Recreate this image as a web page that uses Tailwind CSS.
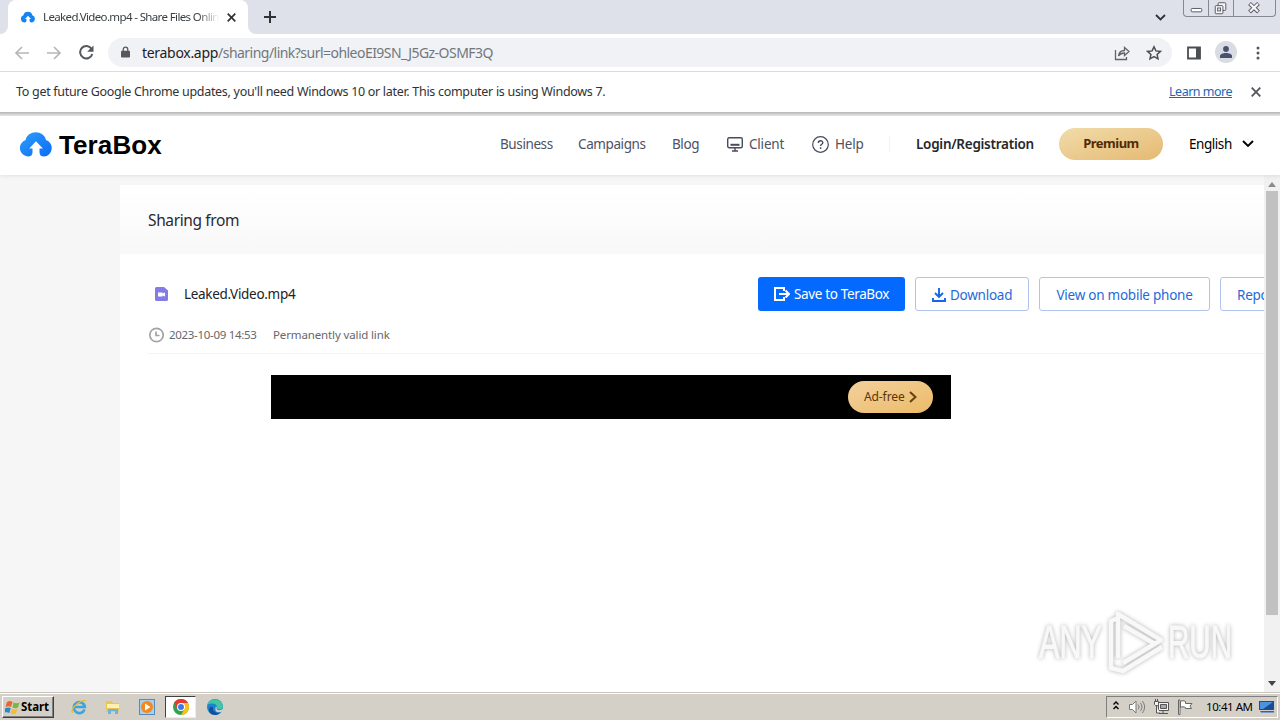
<!DOCTYPE html>
<html lang="en">
<head>
    <meta charset="UTF-8">
    <meta name="viewport" content="width=device-width, initial-scale=1.0">
    <title>Leaked.Video.mp4 - Share Files Online</title>
    <script src="https://cdn.jsdelivr.net/npm/@tailwindcss/browser@4"></script>
</head>
<body class="w-[1280px] h-[720px] overflow-hidden flex flex-col bg-white font-['Noto_Sans',sans-serif] whitespace-nowrap">
    <!-- Tab strip -->
    <div class="h-[34px] shrink-0 bg-[#dee1e9] flex">
        <div class="w-2 flex items-end"><div class="w-2 h-2 bg-white"><div class="w-2 h-2 bg-[#dee1e9] rounded-br-lg"></div></div></div>
        <div class="w-[240px] bg-white rounded-t-lg flex items-center pl-[13px]">
            <svg class="w-[14px] h-3 shrink-0" viewBox="0 0 32 26" fill="#1683f7"><path d="M8 25.500A8.500 8.500 0 0 1 5.500 9 10.500 10 0 0 1 26 9a8.500 8.500 0 0 1-2 16.500c-3 0-4.500-1.500-4.500-4.500v-3.500h3.300L16 10.300 9.200 17.500h3.300V21c0 3-1.500 4.500-4.500 4.500z"/></svg>
            <div class="ml-2 w-[176px] text-[11.5px] tracking-[-0.63px] text-[#3c4043] [mask-image:linear-gradient(to_right,#000_88%,transparent)]">Leaked.Video.mp4 - Share Files Onlin</div>
            <svg class="w-[9px] h-[9px] ml-2 shrink-0" viewBox="0 0 9 9" stroke="#303236" stroke-width="1.700"><path d="M.7.7l7.600 7.600M8.300.7L.7 8.300"/></svg>
        </div>
        <div class="w-2 flex items-end"><div class="w-2 h-2 bg-white"><div class="w-2 h-2 bg-[#dee1e9] rounded-bl-lg"></div></div></div>
        <svg class="w-3 h-3 ml-2 mt-[11px]" viewBox="0 0 12 12" stroke="#303236" stroke-width="2"><path d="M6 0v12M0 6h12"/></svg>
        <svg class="w-[11px] h-[7px] ml-auto mt-[14px] mr-[17px]" viewBox="0 0 11 7" fill="none" stroke="#303236" stroke-width="1.800"><path d="M1 1l4.500 4.500L10 1"/></svg>
        <div class="w-[93px] h-[17px] mr-1 border border-t-0 border-[#85888f] rounded-b-[4px] flex">
            <svg class="w-[25px] h-4 border-r border-[#85888f]" viewBox="0 0 25 16"><rect x="7.500" y="8.500" width="11" height="3.500" rx="1" fill="#fff" stroke="#55585e"/></svg>
            <svg class="w-[25px] h-4 border-r border-[#85888f]" viewBox="0 0 25 16" fill="#f4f5f8" stroke="#55585e"><rect x="9.500" y="2.500" width="8" height="8" rx="1"/><rect x="6.500" y="5.500" width="8" height="8.500" rx="1"/><rect x="9" y="8" width="3" height="3"/></svg>
            <svg class="w-[41px] h-4" viewBox="0 0 41 16"><path d="M15.500 3.500l9 8.500M24.500 3.500l-9 8.500" stroke="#55585e" stroke-width="4"/><path d="M16 3.900l8 7.600M24 3.900l-8 7.600" stroke="#f4f5f8" stroke-width="2.200"/></svg>
        </div>
    </div>

    <!-- Toolbar -->
    <div class="h-[38px] shrink-0 border-b border-[#d9dbdf] flex items-center">
        <svg class="w-4 h-[14px] ml-[14px]" viewBox="0 0 16 14" fill="none" stroke="#b5b7ba" stroke-width="1.700"><path d="M15 7H2M8 1L2 7l6 6"/></svg>
        <svg class="w-4 h-[14px] ml-4" viewBox="0 0 16 14" fill="none" stroke="#b5b7ba" stroke-width="1.700"><path d="M1 7h13M8 1l6 6-6 6"/></svg>
        <svg class="w-[15px] h-[15px] ml-[17px]" viewBox="0 0 15 15"><path d="M12.500 3.800A6.200 6.200 0 1 0 13.300 9" fill="none" stroke="#55585c" stroke-width="2"/><path d="M14.500.5v6.300H8.200z" fill="#55585c"/></svg>
        <div class="ml-[14px] w-[1064px] h-[29px] rounded-full bg-[#f0f2f5] flex items-center">
            <svg class="w-[9px] h-3 ml-[13px] mb-[2px]" viewBox="0 0 10 12"><rect y="4.500" width="10" height="7.500" rx="1" fill="#55585c"/><path d="M2.500 5V3a2.500 2.500 0 0 1 5 0v2" fill="none" stroke="#55585c" stroke-width="1.400"/></svg>
            <div class="ml-[12px] text-[14px] tracking-[-0.53px] text-[#73777c]"><span class="text-[#202124] tracking-[-0.3px]">terabox.app</span>/sharing/link?surl=ohleoEI9SN_J5Gz-OSMF3Q</div>
            <svg class="w-4 h-4 ml-auto mr-4" viewBox="0 0 16 16" fill="none" stroke="#5f6368" stroke-width="1.300"><path d="M1.500 5v9.500h11V12M4.500 11c.5-4 3-5.500 6-5.500V2.500l4.500 4-4.500 4V8c-3 0-4.500.8-6 3z"/></svg>
            <svg class="w-4 h-4 mr-[10px]" viewBox="0 0 16 16" fill="none" stroke="#4b4e52" stroke-width="1.500"><path d="M8 1.800l1.900 4.100 4.500.5-3.300 3 .9 4.400L8 11.600l-4 2.200.9-4.400-3.300-3 4.500-.5z"/></svg>
        </div>
        <svg class="w-[14px] h-[14px] ml-[15px]" viewBox="0 0 14 14"><path d="M1 1.500h12v11H1z" fill="none" stroke="#4b4e52" stroke-width="1.800"/><path d="M9 1h4v12H9z" fill="#4b4e52"/></svg>
        <div class="w-[22px] h-[22px] ml-[14px] mb-px rounded-full bg-[#d9dce2] flex items-center justify-center">
            <svg class="w-3 h-3" viewBox="0 0 12 12" fill="#485270"><circle cx="6" cy="3" r="2.900"/><path d="M0 12V10c0-2 3-3 6-3s6 1 6 3v2z"/></svg>
        </div>
        <svg class="w-1 h-[14px] ml-[19px]" viewBox="0 0 4 14" fill="#55585c"><circle cx="2" cy="2" r="1.500"/><circle cx="2" cy="7" r="1.500"/><circle cx="2" cy="12" r="1.500"/></svg>
    </div>

    <!-- Update notice -->
    <div class="h-[40px] shrink-0 flex items-center pl-4 text-[12.5px] text-[#303236]">
        <div class="tracking-[-0.3px]">To get future Google Chrome updates, you'll need Windows 10 or later. This computer is using Windows 7.</div>
        <div class="ml-auto mr-[19px] text-[#1a66b8] underline tracking-[-0.5px]">Learn more</div>
        <svg class="w-[10px] h-[10px] mr-[19px]" viewBox="0 0 10 10" stroke="#55585c" stroke-width="1.900"><path d="M.7.7l8.600 8.600M9.300.7L.7 9.300"/></svg>
    </div>
    <div class="h-1 shrink-0 bg-linear-to-b from-[#b4b4b4] to-[#eeeeee]"></div>

    <!-- Site header -->
    <header class="h-[59px] shrink-0 bg-white flex items-center pl-5 pb-[3px] text-[13.5px] text-[#4e5162] shadow-[0_1px_4px_rgba(0,0,0,0.09)] relative z-10">
        <svg class="w-8 h-[26px]" viewBox="0 0 32 26">
            <defs>
                <linearGradient id="cloud" x1="0" y1="0" x2="1" y2="1">
                    <stop offset="0" stop-color="#2f9efa"/>
                    <stop offset="1" stop-color="#0a6cf8"/>
                </linearGradient>
            </defs>
            <path fill="url(#cloud)" d="M8 25.500A8.500 8.500 0 0 1 5.500 9 10.500 10 0 0 1 26 9a8.500 8.500 0 0 1-2 16.500c-3 0-4.500-1.500-4.500-4.500v-3.500h3.300L16 10.300 9.200 17.500h3.300V21c0 3-1.500 4.500-4.500 4.500z"/>
        </svg>
        <div class="ml-[7px] w-[103px] mt-[2px] text-[26px] leading-8 tracking-[0.1px] text-black font-['Liberation_Sans',sans-serif] font-bold">TeraBox</div>
        <nav class="ml-[338px] flex items-center tracking-[-0.4px]">
            <div class="w-[78px]">Business</div>
            <div class="w-[94px]">Campaigns</div>
            <div class="w-[55px]">Blog</div>
            <svg class="w-4 h-[15px]" viewBox="0 0 16 15" fill="none" stroke="#484b5c" stroke-width="1.400"><rect x=".7" y=".7" width="14.600" height="10" rx="1.500"/><path d="M3.500 7.800h9" stroke-width="2"/><path d="M8 11v2.500M5 14h6"/></svg>
            <div class="ml-[6px] w-[63px] tracking-[-0.2px]">Client</div>
            <svg class="w-[17px] h-[17px]" viewBox="0 0 17 17" fill="none" stroke="#484b5c" stroke-width="1.200"><circle cx="8.500" cy="8.500" r="7.800"/><path d="M6.300 7c0-3 4.500-3 4.500-.3 0 1.600-2.200 1.600-2.200 3.300M8.600 11.300v1.600" stroke-width="1.400"/></svg>
            <div class="ml-[6px] w-[54px] tracking-[-0.2px]">Help</div>
        </nav>
        <div class="w-px h-4 bg-[#f3f3f3]"></div>
        <div class="ml-[26px] w-[143px] font-semibold tracking-[-0.27px] text-[#26272c]">Login/Registration</div>
        <div class="w-[104px] h-8 rounded-full bg-linear-to-br from-[#f1dcaa] to-[#e5b972] flex items-center justify-center text-[13px] tracking-[-0.5px] font-bold text-[#512b05]">Premium</div>
        <div class="ml-[26px] w-[53px] tracking-[-0.45px] text-black">English</div>
        <svg class="w-3 h-2" viewBox="0 0 12 8" fill="none" stroke="#000" stroke-width="1.900"><path d="M1 1l5 5 5-5"/></svg>
    </header>

    <!-- Page -->
    <div class="h-[517px] shrink-0 flex">
        <div class="w-[120px] bg-[#f6f6f6]"></div>
        <main class="w-[1144px] overflow-hidden flex flex-col">
            <div class="h-[10px] shrink-0 bg-[#f6f6f6]"></div>
            <div class="h-[69px] shrink-0 pl-7 pt-[3px] flex items-center bg-linear-to-b from-white to-[#f8f8f8] text-[15.500px] tracking-[-0.38px] text-[#2a2b32]">Sharing from</div>
            <div class="pl-7 pt-[23px] flex flex-col">
                <div class="flex items-center h-[34px] text-[13.500px] tracking-[-0.25px] text-[#1f6bd6]">
                    <svg class="w-[13px] h-[14px] ml-[7px] shrink-0" viewBox="0 0 13 14"><path d="M1.500 0H9l4 3.500V12.500a1.500 1.500 0 0 1-1.500 1.500h-10A1.500 1.500 0 0 1 0 12.500v-11A1.500 1.500 0 0 1 1.500 0z" fill="#847be9"/><path d="M3 5.500h4.500v1L10 5.500v4L7.500 8.500v1H3z" fill="#fff"/></svg>
                    <div class="ml-4 w-[574px] shrink-0 tracking-[-0.3px] text-[#202127]">Leaked.Video.mp4</div>
                    <div class="w-[147px] h-[34px] shrink-0 rounded-[3px] bg-[#0469ff] text-white flex items-center pl-4">
                        <svg class="w-4 h-[14px] mr-[4px]" viewBox="0 0 16 14" fill="none" stroke="#fff" stroke-width="2"><path d="M10 4V1H1v12h9v-3M5 7h9.500M11.500 3.500L15 7l-3.500 3.500"/></svg>
                        <span class="tracking-[-0.35px]">Save to TeraBox</span>
                    </div>
                    <div class="w-[114px] h-[34px] ml-[10px] pt-[2px] shrink-0 rounded-[3px] border border-[#b1c4ec] flex items-center pl-4">
                        <svg class="w-[14px] h-[14px] mr-1" viewBox="0 0 14 14" fill="none" stroke="#1565e8" stroke-width="1.900"><path d="M7 0v9M3 5l4 4 4-4M1 10v3h12v-3"/></svg>
                        <span>Download</span>
                    </div>
                    <div class="w-[171px] h-[34px] ml-[10px] pt-[2px] shrink-0 rounded-[3px] border border-[#b1c4ec] flex items-center justify-center">View on mobile phone</div>
                    <div class="w-[90px] h-[34px] ml-[10px] pt-[2px] shrink-0 rounded-[3px] border border-[#b1c4ec] flex items-center pl-4">Report</div>
                </div>
                <div class="h-[43px] flex items-center pt-[6px] text-[11.500px] text-[#66676c] border-b border-[#f4f4f4]">
                    <svg class="w-4 h-4" viewBox="0 0 16 16" fill="none" stroke="#a4a4a4" stroke-width="1.700"><circle cx="8.500" cy="8" r="6.700"/><path d="M8 4.500v4h3.500"/></svg>
                    <div class="ml-[5px] w-[104px] tracking-[-0.3px]">2023-10-09 14:53</div>
                    <div class="tracking-[-0.13px]">Permanently valid link</div>
                </div>
                <div class="ml-[123px] mt-[21px] w-[680px] h-[44px] bg-black flex items-center justify-end pr-[18px]">
                    <div class="w-[85px] h-8 rounded-full bg-linear-to-br from-[#f3d09c] to-[#ebbb66] flex items-center pl-4 text-[12px] tracking-[-0.1px] text-[#5c3508]">
                        <span class="w-[45px]">Ad-free</span>
                        <svg class="w-2 h-3" viewBox="0 0 8 12" fill="none" stroke="#6a430f" stroke-width="2.200"><path d="M1 1l5.500 5L1 11"/></svg>
                    </div>
                </div>
            </div>
        </main>
        <div class="w-4 bg-[#f1f1f1] flex flex-col items-center">
            <svg class="w-[8px] h-[5px] mt-[7px]" viewBox="0 0 8 5" fill="#8b8b8b"><path d="M4 0l4 5H0z"/></svg>
            <div class="w-3 h-[424px] mt-1 bg-[#c1c1c1]"></div>
            <svg class="w-[8px] h-[5px] mt-auto mb-[6px]" viewBox="0 0 8 5" fill="#444"><path d="M0 0h8L4 5z"/></svg>
        </div>
    </div>

    <!-- Watermark -->
    <svg class="absolute left-[1030px] top-[600px] w-[220px] h-[80px] drop-shadow-[0_0_2px_rgba(0,0,0,0.3)]" viewBox="0 0 220 80">
        <g fill="#f8f8f8" stroke="#f8f8f8" font-family="Liberation Sans, sans-serif" font-size="47">
            <text x="9" y="58" textLength="63" lengthAdjust="spacingAndGlyphs">ANY</text>
            <text x="138" y="58" textLength="64" lengthAdjust="spacingAndGlyphs">RUN</text>
        </g>
        <path d="M88 58V14l43 26-38 23M88 18l-7 3v47l12 3 39-24M94 26l31 18" fill="none" stroke="#f8f8f8" stroke-width="4.500" stroke-linejoin="round"/>
    </svg>

    <!-- Taskbar -->
    <div class="h-7 shrink-0 bg-[#d4d0c8] border-t border-[#c9c5bd] relative z-10">
        <div class="h-[27px] border-t border-white flex items-center">
            <div class="ml-[2px] w-[52px] h-[22px] border border-t-white border-l-white border-r-[#404040] border-b-[#404040] shadow-[inset_-1px_-1px_0_#808080] flex items-center pl-[2px]">
                <svg class="w-[15px] h-[15px] shrink-0" viewBox="0 0 15 15"><path d="M2 2c2-1.500 4-1.500 5.500 0L6 7C4 6 2.500 6 .5 7z" fill="#e6662c"/><path d="M8.500 2.500c2 1 4 1 6 0L13 7.500c-2 1-4 1-5.500 0z" fill="#77b843"/><path d="M.2 8.300c2-1 4-1 5.500 0l-1.400 5C3 12-.5 12-1 13z" fill="#2e85cf"/><path d="M7 8.700c2 1 4 1 5.700 0L11 13.500c-2 1-4 1-5.500 0z" fill="#f5bd32"/></svg>
                <span class="ml-px text-[11.5px] leading-4 tracking-[-0.1px] font-bold text-black">Start</span>
            </div>
            <svg class="w-4 h-4 ml-[17px]" viewBox="0 0 16 16" fill="none"><path d="M13.500 10.500A5.500 5.500 0 1 1 13.800 8H4" stroke="#3ba5df" stroke-width="2.700"/><path d="M1.500 14C-1 10 10-.5 15 2" stroke="#e5b936" stroke-width="1.300"/></svg>
            <svg class="w-4 h-4 ml-[18px]" viewBox="0 0 16 16"><path d="M1 2h6l1 2h6v9H1z" fill="#e7c55d"/><path d="M2 5h12v4H2z" fill="#fff0b0"/><path d="M3 15v-5h10v5h-3v-3H6v3z" fill="#69b5df"/></svg>
            <svg class="w-4 h-4 ml-[18px]" viewBox="0 0 16 16"><rect x=".5" y=".5" width="15" height="15" fill="#a7d0ee" stroke="#548bbb"/><circle cx="8" cy="8" r="6" fill="#f3881c"/><path d="M6 4.500l5.500 3.500L6 11.500z" fill="#fff"/></svg>
            <div class="w-[31px] h-[22px] ml-[10px] bg-white border border-t-[#404040] border-l-[#404040] border-r-[#eee] border-b-[#eee] flex items-center justify-center">
                <svg class="w-4 h-4" viewBox="0 0 16 16"><circle cx="8" cy="8" r="8" fill="#34a14f"/><path d="M1.070 4A8 8 0 0 1 14.930 4H8L4.500 10z" fill="#e33b2e"/><path d="M14.930 4A8 8 0 0 1 8 16l3.500-6L8 4z" fill="#fbc116"/><circle cx="8" cy="8" r="4" fill="#fff"/><circle cx="8" cy="8" r="3" fill="#3f79e8"/></svg>
            </div>
            <svg class="w-4 h-4 ml-[11px]" viewBox="0 0 16 16"><circle cx="8" cy="8" r="8" fill="#1d83ce"/><path d="M.3 6C2-1 14-2 16 7c0 4-5 4-6 2.500C11 5 5 3 .3 6z" fill="#42c5a2"/><path d="M6 8c-1 5 4 7 8 5-4 5-12 3-12-2 0-3 2-4 4-3z" fill="#114f9e"/><path d="M9 7.500c1.500 1 0 2 1 3 1.500 1.200 4 .7 6-.5V12l-2 1c-4 1-7-1-5-5.500z" fill="#d4d0c8"/></svg>
            <div class="ml-auto mr-[2px] w-[172px] h-[22px] border border-t-[#808080] border-l-[#808080] border-r-white border-b-white flex items-center pl-[6px]">
                <svg class="w-[6px] h-[9px] mb-[3px]" viewBox="0 0 6 9" fill="none" stroke="#000" stroke-width="1.400"><path d="M.5 3.500L3 1l2.500 2.500M.5 8L3 5.500 5.500 8"/></svg>
                <svg class="w-[16px] h-[14px] ml-[10px]" viewBox="0 0 16 14" fill="#fff" stroke="#777" stroke-width="1"><path d="M.5 4.500h3L7 1v12L3.500 9.500h-3z"/><path d="M9 4.500c1.300 1.500 1.300 3.500 0 5M11.200 2.800c2.300 2.400 2.300 6 0 8.400M13.300 1c3 3.500 3 8.500 0 12" fill="none"/></svg>
                <svg class="w-4 h-4 ml-2" viewBox="0 0 16 16" fill="#f5f5f5" stroke="#555"><path d="M5.500 3.500h10v8h-10zM6 14.500h9M10 12v2"/><path d="M7.500 5.500h6v4h-6z" fill="#aaa"/><path d="M1.500 2.500h4v3l-1 1h-2l-1-1zM2.500 0v2M4.500 0v2M3.500 7v7H7"/></svg>
                <svg class="w-4 h-4 ml-2" viewBox="0 0 16 16" fill="#fff" stroke="#666"><path d="M1.500 1v14.500H3V1zM3.500 2.500c2-1 3-1 5 0v2h6.500l-2 2.500 1.500 2.500h-6v-1c-2-1-3-1-5 0z"/></svg>
                <div class="ml-[13px] w-[53px] text-[11.5px] tracking-[-0.45px] text-black">10:41 AM</div>
                <svg class="w-4 h-3" viewBox="0 0 16 12"><path d="M0 0h15v9H0z" fill="#194b9c"/><path d="M1 1h13L4 8H1z" fill="#4f92dc"/><path d="M1 10h14v1.500H2z" fill="#2a65b0"/></svg>
            </div>
        </div>
    </div>
</body>
</html>
